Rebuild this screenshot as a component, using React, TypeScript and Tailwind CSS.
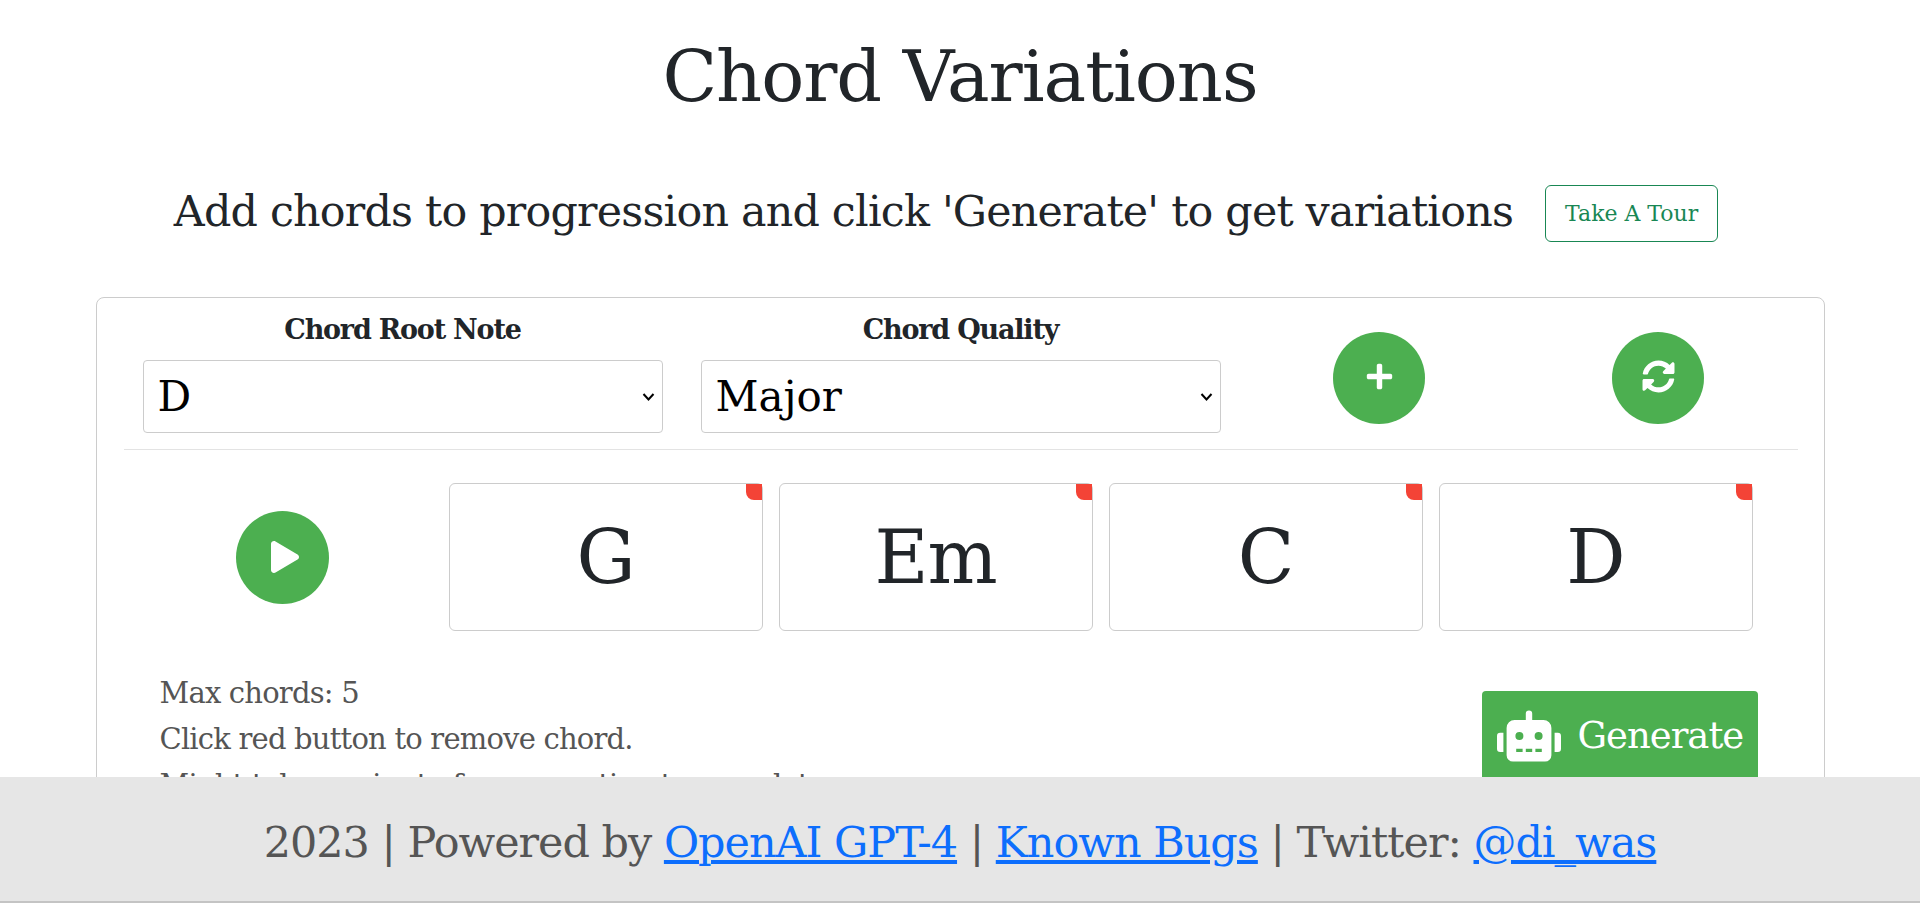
import { FaPlus, FaSyncAlt, FaPlay, FaRobot } from 'react-icons/fa'

const roots = ['C', 'D', 'E', 'F', 'G', 'A', 'B']
const qualities = ['Major', 'Minor', 'Dominant 7', 'Major 7', 'Minor 7']
const chords = ['G', 'Em', 'C', 'D']

function Field({ label, value, options }: { label: string; value: string; options: string[] }) {
  return (
    <div className="col-span-2 px-[19px] text-center">
      <label className="block h-[34px] text-[27px] font-bold leading-[34px] tracking-[-1.2px]">{label}</label>
      <div className="relative mt-[13px]">
        <select defaultValue={value} className="block h-[73px] w-full appearance-none rounded border border-[#ccc] bg-white pl-[14px] pr-[30px] text-[42px] text-black">
          {options.map((o) => (
            <option key={o}>{o}</option>
          ))}
        </select>
        <svg viewBox="0 0 13 8" className="pointer-events-none absolute top-[33px] right-[8px] h-[8px] w-[13px]" fill="none" stroke="black" strokeWidth="2">
          <polyline points="1.5,1 6.5,6.5 11.5,1" />
        </svg>
      </div>
    </div>
  )
}

export default function App() {
  return (
    <div className="min-h-screen bg-white text-[#212529] font-['DejaVu_Serif',serif]">
      {/* Header */}
      <h1 className="pt-[29px] text-center text-[71.5px] leading-[96px] tracking-[-1px]">Chord Variations</h1>
      <div className="mt-[60px] flex h-[57px] items-center justify-center gap-[32px] pr-[28px]">
        <p className="pb-[4px] text-[42.8px] tracking-[-0.8px]">Add chords to progression and click 'Generate' to get variations</p>
        <button className="h-[57px] w-[173px] rounded-md border border-[#198754] text-[22px] text-[#198754]">
          Take A Tour
        </button>
      </div>

      {/* Main card */}
      <div className="mx-auto mt-[55px] mb-[140px] w-[1729px] rounded-lg border border-[#ccc] pl-[27px] pr-[26px] pt-[15px] pb-[40px]">
        <div className="grid grid-cols-6 border-b border-[#e3e3e3] pb-[16px]">
          <Field label="Chord Root Note" value="D" options={roots} />
          <Field label="Chord Quality" value="Major" options={qualities} />
          <div className="flex justify-center pt-[19px]">
            <button className="flex h-[92px] w-[92px] items-center justify-center rounded-full bg-[#4caf50] pb-[3px] text-white">
              <FaPlus size={29} />
            </button>
          </div>
          <div className="flex justify-center pt-[19px]">
            <button className="flex h-[92px] w-[92px] items-center justify-center rounded-full bg-[#4caf50] pb-[3px] text-white">
              <FaSyncAlt size={33} />
            </button>
          </div>
        </div>

        {/* Progression */}
        <div className="mt-[33px] flex">
          <div className="flex w-[318px] items-center justify-center">
            <button className="flex h-[93px] w-[93px] items-center justify-center rounded-full bg-[#4caf50] pl-[4px] text-white">
              <FaPlay size={32} />
            </button>
          </div>
          <div className="ml-[7px] flex gap-[16px]">
            {chords.map((c) => (
              <div key={c} className="relative flex h-[148px] w-[314px] items-center justify-center rounded-md border border-[#ccc] text-[74px] tracking-[-1px]">
                {c}
                <span className="absolute top-0 right-0 h-[16px] w-[16px] rounded-bl-lg bg-[#f44336]" />
              </div>
            ))}
          </div>
        </div>

        {/* Notes and generate */}
        <div className="mt-[39px] flex items-start justify-between pl-[36px] pr-[40px]">
          <div className="text-[29px] leading-[46px] tracking-[-0.8px] text-[#555]">
            <p>Max chords: 5</p>
            <p>Click red button to remove chord.</p>
            <p>Might take a minute for generation to complete</p>
          </div>
          <button className="mt-[21px] flex h-[95px] w-[276px] items-center gap-[17px] rounded bg-[#4caf50] pb-[6px] pl-[15px] text-[37px] tracking-[-1px] text-white">
            <FaRobot size={64} />
            Generate
          </button>
        </div>
      </div>

      {/* Footer */}
      <footer className="fixed right-0 bottom-0 left-0 flex h-[126px] items-center justify-center border-b-2 border-[#c4c4c4] bg-[#e6e6e6] pt-[6px] text-[42.9px] tracking-[-1px] text-[#555]">
        <p>
          2023 | Powered by <a href="#" className="text-[#0d6efd] underline">OpenAI GPT-4</a> | <a href="#" className="text-[#0d6efd] underline">Known Bugs</a> | Twitter: <a href="#" className="text-[#0d6efd] underline">@di_was</a>
        </p>
      </footer>
    </div>
  )
}
